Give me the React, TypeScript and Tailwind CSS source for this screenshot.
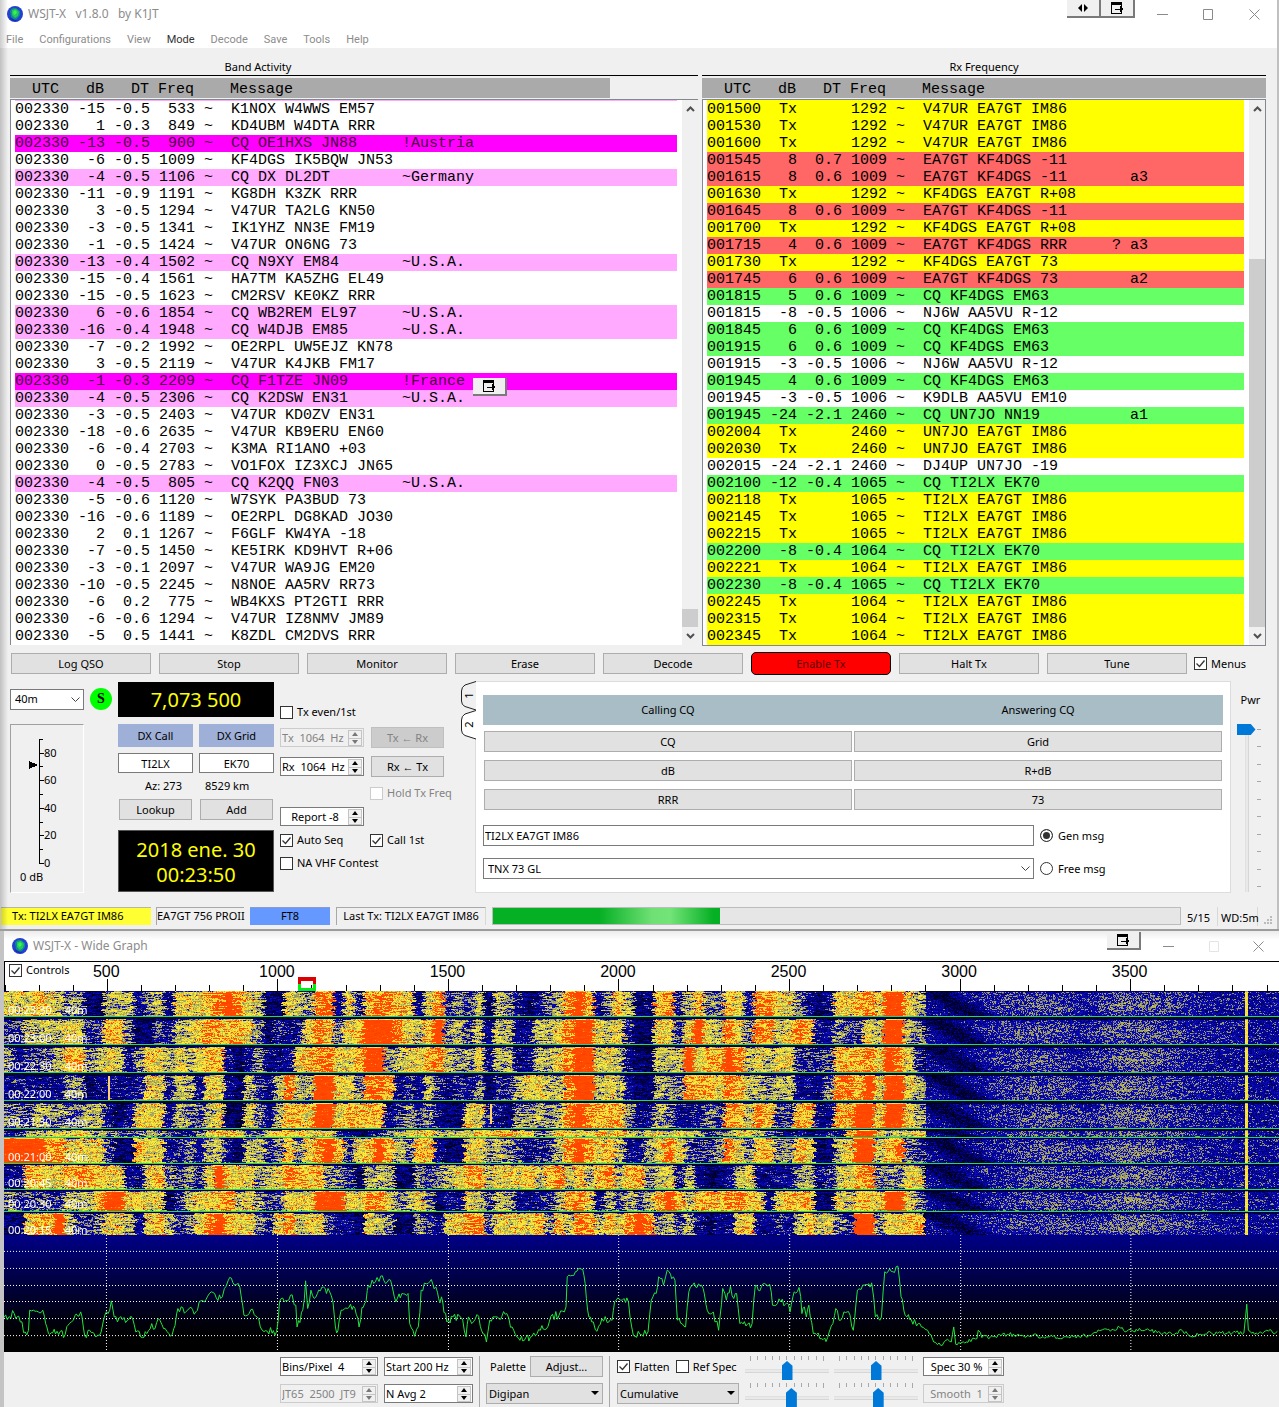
import { useEffect, useRef, type ReactNode } from "react";
import clsx from "clsx";

type Tone = "none" | "new" | "cq" | "tx" | "mine" | "green";

type Decode = [utc: string, db: string, dt: string, freq: string, message: string, note: string, tone: Tone];

const toneClass: Record<Tone, string> = {
  none: "",
  new: "bg-[#ff00ff] text-[#4b0040]",
  cq: "bg-[#ffaaff]",
  tx: "bg-[#ffff00]",
  mine: "bg-[#ff6666]",
  green: "bg-[#66ff66]",
};

const bandActivity: Decode[] = [
  ["002330", "-15", "-0.5", "533", "K1NOX W4WWS EM57", "", "none"],
  ["002330", "1", "-0.3", "849", "KD4UBM W4DTA RRR", "", "none"],
  ["002330", "-13", "-0.5", "900", "CQ OE1HXS JN88", "!Austria", "new"],
  ["002330", "-6", "-0.5", "1009", "KF4DGS IK5BQW JN53", "", "none"],
  ["002330", "-4", "-0.5", "1106", "CQ DX DL2DT", "~Germany", "cq"],
  ["002330", "-11", "-0.9", "1191", "KG8DH K3ZK RRR", "", "none"],
  ["002330", "3", "-0.5", "1294", "V47UR TA2LG KN50", "", "none"],
  ["002330", "-3", "-0.5", "1341", "IK1YHZ NN3E FM19", "", "none"],
  ["002330", "-1", "-0.5", "1424", "V47UR ON6NG 73", "", "none"],
  ["002330", "-13", "-0.4", "1502", "CQ N9XY EM84", "~U.S.A.", "cq"],
  ["002330", "-15", "-0.4", "1561", "HA7TM KA5ZHG EL49", "", "none"],
  ["002330", "-15", "-0.5", "1623", "CM2RSV KE0KZ RRR", "", "none"],
  ["002330", "6", "-0.6", "1854", "CQ WB2REM EL97", "~U.S.A.", "cq"],
  ["002330", "-16", "-0.4", "1948", "CQ W4DJB EM85", "~U.S.A.", "cq"],
  ["002330", "-7", "-0.2", "1992", "OE2RPL UW5EJZ KN78", "", "none"],
  ["002330", "3", "-0.5", "2119", "V47UR K4JKB FM17", "", "none"],
  ["002330", "-1", "-0.3", "2209", "CQ F1TZE JN09", "!France", "new"],
  ["002330", "-4", "-0.5", "2306", "CQ K2DSW EN31", "~U.S.A.", "cq"],
  ["002330", "-3", "-0.5", "2403", "V47UR KD0ZV EN31", "", "none"],
  ["002330", "-18", "-0.6", "2635", "V47UR KB9ERU EN60", "", "none"],
  ["002330", "-6", "-0.4", "2703", "K3MA RI1ANO +03", "", "none"],
  ["002330", "0", "-0.5", "2783", "VO1FOX IZ3XCJ JN65", "", "none"],
  ["002330", "-4", "-0.5", "805", "CQ K2QQ FN03", "~U.S.A.", "cq"],
  ["002330", "-5", "-0.6", "1120", "W7SYK PA3BUD 73", "", "none"],
  ["002330", "-16", "-0.6", "1189", "OE2RPL DG8KAD JO30", "", "none"],
  ["002330", "2", "0.1", "1267", "F6GLF KW4YA -18", "", "none"],
  ["002330", "-7", "-0.5", "1450", "KE5IRK KD9HVT R+06", "", "none"],
  ["002330", "-3", "-0.1", "2097", "V47UR WA9JG EM20", "", "none"],
  ["002330", "-10", "-0.5", "2245", "N8NOE AA5RV RR73", "", "none"],
  ["002330", "-6", "0.2", "775", "WB4KXS PT2GTI RRR", "", "none"],
  ["002330", "-6", "-0.6", "1294", "V47UR IZ8NMV JM89", "", "none"],
  ["002330", "-5", "0.5", "1441", "K8ZDL CM2DVS RRR", "", "none"],
];

const rxFrequency: Decode[] = [
  ["001500", "Tx", "", "1292", "V47UR EA7GT IM86", "", "tx"],
  ["001530", "Tx", "", "1292", "V47UR EA7GT IM86", "", "tx"],
  ["001600", "Tx", "", "1292", "V47UR EA7GT IM86", "", "tx"],
  ["001545", "8", "0.7", "1009", "EA7GT KF4DGS -11", "", "mine"],
  ["001615", "8", "0.6", "1009", "EA7GT KF4DGS -11", "    a3", "mine"],
  ["001630", "Tx", "", "1292", "KF4DGS EA7GT R+08", "", "tx"],
  ["001645", "8", "0.6", "1009", "EA7GT KF4DGS -11", "", "mine"],
  ["001700", "Tx", "", "1292", "KF4DGS EA7GT R+08", "", "tx"],
  ["001715", "4", "0.6", "1009", "EA7GT KF4DGS RRR", "  ? a3", "mine"],
  ["001730", "Tx", "", "1292", "KF4DGS EA7GT 73", "", "tx"],
  ["001745", "6", "0.6", "1009", "EA7GT KF4DGS 73", "    a2", "mine"],
  ["001815", "5", "0.6", "1009", "CQ KF4DGS EM63", "", "green"],
  ["001815", "-8", "-0.5", "1006", "NJ6W AA5VU R-12", "", "none"],
  ["001845", "6", "0.6", "1009", "CQ KF4DGS EM63", "", "green"],
  ["001915", "6", "0.6", "1009", "CQ KF4DGS EM63", "", "green"],
  ["001915", "-3", "-0.5", "1006", "NJ6W AA5VU R-12", "", "none"],
  ["001945", "4", "0.6", "1009", "CQ KF4DGS EM63", "", "green"],
  ["001945", "-3", "-0.5", "1006", "K9DLB AA5VU EM10", "", "none"],
  ["001945", "-24", "-2.1", "2460", "CQ UN7JO NN19", "    a1", "green"],
  ["002004", "Tx", "", "2460", "UN7JO EA7GT IM86", "", "tx"],
  ["002030", "Tx", "", "2460", "UN7JO EA7GT IM86", "", "tx"],
  ["002015", "-24", "-2.1", "2460", "DJ4UP UN7JO -19", "", "none"],
  ["002100", "-12", "-0.4", "1065", "CQ TI2LX EK70", "", "green"],
  ["002118", "Tx", "", "1065", "TI2LX EA7GT IM86", "", "tx"],
  ["002145", "Tx", "", "1065", "TI2LX EA7GT IM86", "", "tx"],
  ["002215", "Tx", "", "1065", "TI2LX EA7GT IM86", "", "tx"],
  ["002200", "-8", "-0.4", "1064", "CQ TI2LX EK70", "", "green"],
  ["002221", "Tx", "", "1064", "TI2LX EA7GT IM86", "", "tx"],
  ["002230", "-8", "-0.4", "1065", "CQ TI2LX EK70", "", "green"],
  ["002245", "Tx", "", "1064", "TI2LX EA7GT IM86", "", "tx"],
  ["002315", "Tx", "", "1064", "TI2LX EA7GT IM86", "", "tx"],
  ["002345", "Tx", "", "1064", "TI2LX EA7GT IM86", "", "tx"],
];

// One digit per 10 px of spectrum, 0 = noise floor, 9 = saturated.
const waterfall = [
  { from: 0, to: 25, levels: "6667654411555245266678986511654882637887626" + "834351542124589724751278357447638866421266" + "786996542" },
  { from: 28, to: 53, levels: "3355556633774113255687776413236874679998657" + "945352552255689965631166369658648856872243" + "365995432" },
  { from: 56, to: 81, levels: "4233457745652466565677212422267886679945667" + "854462552255689956521155596779856566333377" + "786986311" },
  { from: 84, to: 109, levels: "2322224412222366355266215325855996648872325" + "323241335665589956521154487768755455222488" + "796996542" },
  { from: 112, to: 137, levels: "4435444455212666254356116425776996777723434" + "211663214454589877742254223438758733772277" + "996996543" },
  { from: 139, to: 146, levels: "2345566754434454323477764466777663212345667" + "556677776645766676755665654334665432212327" + "996556753" },
  { from: 147, to: 172, levels: "9999886666311766234255215534746897367975477" + "211664543233589867522468643348647744761156" + "995784333" },
  { from: 174, to: 198, levels: "2277667877662267434369666456877744315551143" + "456775666757857578577456352112562222452356" + "784446611" },
  { from: 200, to: 220, levels: "4333335557996666135667856434666999668864564" + "122653552223578625354579757778876267771165" + "776996421" },
  { from: 222, to: 244, levels: "1167795334665267534689766436856632216541143" + "266884666674758857689845352122672232575643" + "994667711" },
];

const periods: [label: string, top: string][] = [
  ["00:23:30", "top-[11px]"],
  ["00:23:00", "top-[39px]"],
  ["00:22:30", "top-[67px]"],
  ["00:22:00", "top-[95px]"],
  ["00:21:30", "top-[123px]"],
  ["00:21:00", "top-[158px]"],
  ["00:20:45", "top-[184px]"],
  ["00:20:30", "top-[205px]"],
  ["00:20:15", "top-[231px]"],
];

const palette: [number, number, number, number][] = [
  [0, 0, 0, 16],
  [0.14, 0, 0, 80],
  [0.24, 0, 0, 160],
  [0.37, 16, 16, 190],
  [0.4, 140, 140, 110],
  [0.54, 190, 190, 80],
  [0.64, 250, 245, 60],
  [0.76, 255, 200, 40],
  [0.81, 255, 80, 0],
  [1, 255, 64, 0],
];

const trace: [number, number][] = [
  [10, 262], [35, 250], [50, 275], [62, 305], [70, 300], [73, 240], [90, 243], [105, 240], [112, 280], [122, 312],
  [140, 303], [160, 312], [167, 285], [180, 270], [198, 245], [208, 318], [220, 300], [235, 320], [248, 305], [257, 255],
  [265, 250], [273, 212], [280, 260], [300, 268], [325, 265], [333, 305], [345, 320], [360, 310], [372, 280], [380, 295],
  [388, 265], [405, 295], [418, 318], [426, 295], [436, 235], [460, 240], [480, 245], [492, 212], [505, 208], [518, 185],
  [530, 203], [545, 200], [550, 175], [563, 142], [575, 165], [588, 172], [598, 255], [615, 238], [630, 260], [638, 290],
  [655, 303], [678, 303], [685, 215], [712, 195], [725, 225], [728, 290], [742, 240], [749, 152], [754, 235], [762, 180],
  [770, 205], [785, 182], [808, 185], [816, 215], [822, 290], [828, 302], [836, 240], [855, 232], [870, 235], [880, 290],
  [887, 232], [897, 215], [903, 165], [920, 155], [937, 137], [945, 160], [957, 150], [970, 215], [985, 190], [1000, 190],
  [1004, 280], [1016, 318], [1025, 290], [1032, 180], [1053, 155], [1068, 170], [1075, 205], [1085, 215], [1095, 275],
  [1110, 260], [1130, 262], [1142, 320], [1148, 260], [1160, 275], [1173, 258], [1180, 300], [1192, 335], [1200, 270],
  [1215, 260], [1238, 252], [1255, 290], [1270, 322], [1285, 330], [1300, 320], [1320, 298], [1335, 298], [1350, 258],
  [1370, 255], [1387, 230], [1390, 140], [1410, 125], [1428, 118], [1434, 160], [1440, 240], [1450, 275], [1463, 303],
  [1475, 265], [1500, 270], [1506, 215], [1525, 210], [1540, 215], [1548, 290], [1556, 318], [1568, 312], [1588, 305],
  [1596, 210], [1608, 190], [1614, 140], [1626, 165], [1635, 120], [1654, 150], [1660, 270], [1680, 290], [1688, 185],
  [1701, 158], [1723, 175], [1733, 240], [1748, 245], [1761, 300], [1771, 175], [1780, 210], [1790, 168], [1798, 205],
  [1805, 190], [1813, 280], [1828, 287], [1843, 280], [1851, 165], [1858, 180], [1873, 160], [1886, 162], [1893, 225],
  [1913, 215], [1928, 218], [1936, 245], [1946, 185], [1958, 172], [1965, 250], [1971, 230], [1976, 260], [1982, 225],
  [1993, 310], [2013, 325], [2028, 322], [2041, 280], [2048, 235], [2056, 270], [2068, 245], [2083, 255], [2091, 300],
  [2101, 180], [2118, 165], [2136, 158], [2145, 260], [2160, 260], [2168, 125], [2188, 125], [2200, 108], [2208, 200],
  [2218, 255], [2233, 268], [2258, 290], [2273, 300], [2288, 335], [2305, 345], [2318, 330], [2331, 335], [2337, 290],
  [2342, 342], [2368, 335], [2394, 325], [2397, 300], [2406, 322], [2438, 318], [2468, 312], [2518, 315], [2568, 320],
  [2618, 320], [2668, 315], [2698, 300], [2733, 300], [2743, 290], [2753, 300], [2808, 298], [2858, 312], [2898, 302],
  [2918, 318], [2968, 308], [3048, 308], [3055, 222], [3059, 300], [3078, 308], [3108, 302], [3134, 310],
];

function makeRandom(seed: number) {
  let s = seed;
  return () => {
    s = (s * 1664525 + 1013904223) >>> 0;
    return s / 4294967296;
  };
}

function tracePath() {
  const rand = makeRandom(7);
  const out: string[] = [];
  for (let i = 0; i < trace.length - 1; i++) {
    const [x0, y0] = trace[i];
    const [x1, y1] = trace[i + 1];
    const steps = Math.max(1, Math.round((x1 - x0) / 4));
    const jitter = x0 > 2240 ? 12 : 24;
    for (let k = 0; k < steps; k++) {
      const t = k / steps;
      const noise = k === 0 ? 0 : (rand() - 0.5) * jitter;
      out.push(`${Math.round(x0 + (x1 - x0) * t)},${Math.round(y0 + (y1 - y0) * t + noise)}`);
    }
  }
  return out.join(" ");
}

function shade(v: number) {
  const c = Math.min(1, Math.max(0, v));
  for (let i = 1; i < palette.length; i++) {
    if (c <= palette[i][0]) {
      const a = palette[i - 1];
      const b = palette[i];
      const t = (c - a[0]) / (b[0] - a[0]);
      return [a[1] + (b[1] - a[1]) * t, a[2] + (b[2] - a[2]) * t, a[3] + (b[3] - a[3]) * t];
    }
  }
  return [255, 64, 0];
}

const bell = (d: number, w: number) => Math.exp(-(d * d) / (2 * w * w));

function paintWaterfall(ctx: CanvasRenderingContext2D, width: number, height: number) {
  const rand = makeRandom(42);
  const image = ctx.createImageData(width, height);
  const put = (x: number, y: number, c: number[]) => {
    const o = (y * width + x) * 4;
    image.data[o] = c[0];
    image.data[o + 1] = c[1];
    image.data[o + 2] = c[2];
    image.data[o + 3] = 255;
  };
  for (let y = 0; y < height; y++) {
    const index = waterfall.findIndex((b) => y >= b.from && y < b.to);
    const band = waterfall[index];
    let streak = 0;
    let left = 0;
    const wobble = Math.round((rand() - 0.5) * 6);
    for (let x = 0; x < width; x++) {
      if (left-- <= 0) {
        streak = (rand() - 0.5) * 0.34;
        left = 1 + Math.floor(rand() * 6);
      }
      const grain = (rand() - 0.5) * 0.22;
      if (!band) {
        put(x, y, shade(0.06 + Math.abs(grain)));
        continue;
      }
      const t = (y - band.from) / (band.to - band.from);
      const edge = y === band.from ? -0.2 : 0;
      let v: number;
      if (x < 922) {
        const cell = Math.min(band.levels.length - 1, Math.max(0, Math.floor((x + wobble) / 10)));
        const level = Number(band.levels[cell]);
        v = 0.03 + level * 0.098 + (streak + grain) * (level === 9 ? 0.5 : 1);
        if (level < 3) v = 0.08 + level * 0.085 + (streak + grain) * 0.8;
      } else {
        v = 0.26 + 0.04 * bell(x - 1085, 150);
        v += 0.08 * bell(x - 1030 - index * 3, 40) * bell(t - 0.55, 0.35);
        v += 0.1 * bell(x - 1130, 38) * bell(t - 0.5, 0.35);
        v -= 0.05 * bell(x - 1080, 16);
        v += streak * 0.45 + grain * 1.1;
      }
      // the filter skirt sweeps to the right as each period ages
      v -= 0.2 * bell(x - 930 - t * 42, 12) * (x > 915 ? 1 : 0.4);
      if (x > 1240 && x < 1244) v = 0.68 + grain * 0.6;
      put(x, y, shade(v + edge));
    }
  }
  ctx.putImageData(image, 0, 0);
  ctx.fillStyle = "#20dc50";
  for (const y of [25, 53, 81, 109, 137, 146, 172, 198, 220]) ctx.fillRect(0, y, width, 1);
  ctx.fillStyle = "#ffd070";
  ctx.fillRect(104, 85, 2, 24);
  ctx.fillRect(486, 113, 2, 20);
}

function Globe({ className }: { className: string }) {
  return (
    <svg viewBox="0 0 16 16" className={className} aria-hidden="true">
      <circle cx="8" cy="8" r="8" fill="#2340d0" />
      <path d="M3 5q2-4 6-3l4 3v4l-3 4-3 1-3-3z" fill="#128a8c" />
      <path d="M5 4l4-1 3 3-1 4-3 2-3-3z" fill="#22c860" />
      <path d="M6 6l2-2 2 2-1 2-2 1z" fill="#3df050" />
      <path d="M2 11c2 4 6 5 9 4l-5-2z" fill="#1a2cb8" />
    </svg>
  );
}

function DockIcon() {
  return (
    <svg viewBox="0 0 14 12" className="h-3 w-[14px]" aria-hidden="true" shapeRendering="crispEdges">
      <path d="M1 0h11v3H1z" />
      <path d="M1.500 1v10.500h10V9M11.500 3v2" fill="none" stroke="#000" />
      <path d="M5 7h6" stroke="#000" strokeWidth="1" />
      <path d="M10 4l4 3-4 3z" />
    </svg>
  );
}

function DockButton({ label, className, children }: { label: string; className?: string; children?: ReactNode }) {
  return (
    <button
      aria-label={label}
      className={clsx(
        "flex h-[18px] w-[34px] items-center justify-center border-r-2 border-b-2 border-[#7a7a7a] bg-[#f0f0f0]",
        className,
      )}
    >
      {children ?? <DockIcon />}
    </button>
  );
}

function WindowButtons({ faded }: { faded?: boolean }) {
  return (
    <div className="flex text-[#8a8a8a]">
      <button aria-label="Minimize" className="flex h-7 w-[46px] items-center justify-center">
        <svg viewBox="0 0 11 11" className="size-[11px]" stroke="currentColor"><path d="M0 5.500h11" /></svg>
      </button>
      <button aria-label="Maximize" className={clsx("flex h-7 w-[46px] items-center justify-center", faded && "text-[#e4e4e4]")}>
        <svg viewBox="0 0 11 11" className="size-[11px]" stroke="currentColor" fill="none"><path d="M.5.5h9v10h-9z" /></svg>
      </button>
      <button aria-label="Close" className={clsx("flex h-7 items-center justify-center", faded ? "w-[42px]" : "w-[46px]")}>
        <svg viewBox="0 0 11 11" className="size-[11px]" stroke="currentColor"><path d="M.5.5l10 10M10.500.5l-10 10" /></svg>
      </button>
    </div>
  );
}

function PushButton({ children, className, disabled }: { children: ReactNode; className?: string; disabled?: boolean }) {
  return (
    <button
      disabled={disabled}
      className={clsx(
        "flex h-[21px] items-center justify-center border",
        disabled ? "border-[#bfbfbf] bg-[#cccccc] text-[#838383]" : "border-[#adadad] bg-[#e1e1e1]",
        className,
      )}
    >
      {children}
    </button>
  );
}

function Check({ label, checked, disabled }: { label: string; checked?: boolean; disabled?: boolean }) {
  return (
    <label className={clsx("flex h-4 items-center gap-1 whitespace-nowrap", disabled && "text-[#838383]")}>
      <span className="relative size-[13px]">
        <input
          type="checkbox"
          defaultChecked={checked}
          disabled={disabled}
          className="peer block size-[13px] appearance-none border border-[#333] bg-white disabled:border-[#ccc]"
        />
        <svg viewBox="0 0 13 13" className="pointer-events-none absolute inset-0 hidden size-[13px] peer-checked:block" fill="none" stroke="#333" strokeWidth="1.300">
          <path d="M2.500 6.500l3 3 5-6" />
        </svg>
      </span>
      {label}
    </label>
  );
}

function Spin({ label, value, className, disabled, align = "left" }: {
  label: string;
  value: string;
  className: string;
  disabled?: boolean;
  align?: "left" | "center";
}) {
  return (
    <div
      className={clsx(
        "flex h-[19px] items-center border pr-px",
        disabled ? "border-[#ccc] bg-[#f0f0f0] text-[#838383]" : "border-[#7a7a7a] bg-white",
        className,
      )}
    >
      <input
        aria-label={label}
        defaultValue={value}
        disabled={disabled}
        className={clsx("h-4 w-0 min-w-0 flex-1 bg-transparent pl-px whitespace-pre outline-none", align === "center" && "text-center")}
      />
      <div className={clsx("flex w-[14px] flex-col", disabled ? "text-[#777]" : "text-black")}>
        <button aria-label={`${label} up`} disabled={disabled} className="flex h-2 items-center justify-center border border-b-0 border-[#c4c4c4] bg-[#f0f0f0]">
          <svg viewBox="0 0 6 4" className="h-1 w-[6px]" fill="currentColor"><path d="M3 0l3 4H0z" /></svg>
        </button>
        <button aria-label={`${label} down`} disabled={disabled} className="flex h-2 items-center justify-center border border-[#c4c4c4] bg-[#f0f0f0]">
          <svg viewBox="0 0 6 4" className="h-1 w-[6px]" fill="currentColor"><path d="M3 4l3-4H0z" /></svg>
        </button>
      </div>
    </div>
  );
}

function Select({ label, value, className, solid }: { label: string; value: string; className: string; solid?: boolean }) {
  return (
    <div className={clsx("relative h-[21px]", className)}>
      <select
        aria-label={label}
        className={clsx(
          "block h-[21px] w-full appearance-none border",
          solid ? "border-[#adadad] bg-[#e1e1e1] pl-[2px]" : "border-[#7a7a7a] bg-white pl-1",
        )}
      >
        <option>{value}</option>
      </select>
      {solid ? (
        <svg viewBox="0 0 8 4" className="pointer-events-none absolute top-2 right-1 h-1 w-2"><path d="M0 0h8L4 4z" /></svg>
      ) : (
        <svg viewBox="0 0 9 5" className="pointer-events-none absolute top-2 right-1 h-[5px] w-[9px]" fill="none" stroke="#444"><path d="M.5.5l4 4 4-4" /></svg>
      )}
    </div>
  );
}

function DecodeList({ title, rows, thumb, narrowHeader, topSliver, boxed }: {
  title: string;
  rows: Decode[];
  thumb: string;
  narrowHeader?: boolean;
  topSliver?: string;
  boxed?: boolean;
}) {
  return (
    <section className="flex flex-col">
      <h2 className="flex h-[27px] items-end justify-center pb-px leading-[14px]">
        <span className={clsx(narrowHeader && "mr-[192px]")}>{title}</span>
      </h2>
      <div className="h-px bg-black" />
      <div
        className={clsx(
          "mt-0.5 mb-px h-5 overflow-hidden bg-[#aaaaaa] pl-[22px] font-['Liberation_Mono',monospace] text-[15px] leading-6 whitespace-pre",
          narrowHeader && "w-[600px]",
        )}
      >
        {"UTC   dB   DT Freq    Message"}
      </div>
      <div className={clsx("flex border border-[#828790] bg-white", !boxed && "border-r-0 border-b-0")}>
        <div className="flex-1 pl-1">
          <div className={clsx("h-px", topSliver)} />
          <table className="w-full table-fixed border-collapse font-['Liberation_Mono',monospace] text-[15px] leading-4 whitespace-pre">
            <tbody>
              {rows.map(([utc, db, dt, freq, message, note, tone], i) => (
                <tr key={i} className={clsx("h-[17px]", toneClass[tone])}>
                  <td className="w-[54px] p-0 pt-px">{utc}</td>
                  <td className="w-[36px] p-0 pt-px text-right">{db}</td>
                  <td className="w-[45px] p-0 pt-px text-right">{dt}</td>
                  <td className="w-[45px] p-0 pt-px text-right">{freq}</td>
                  <td className="w-[18px] p-0 pt-px text-right">~</td>
                  <td className="w-[189px] p-0 pt-px pl-[18px]">{message}</td>
                  <td className="p-0 pt-px">{note}</td>
                </tr>
              ))}
            </tbody>
          </table>
        </div>
        <div className="ml-[5px] flex w-4 flex-col items-center bg-[#f0f0f0]">
          <svg viewBox="0 0 9 6" className="my-[6px] h-[6px] w-[9px] shrink-0" fill="none" stroke="#505050" strokeWidth="2"><path d="M1 5l3.500-3.500L8 5" /></svg>
          <div className="flex-1" />
          <div className={clsx("w-4 shrink-0 bg-[#cdcdcd]", thumb)} />
          <svg viewBox="0 0 9 6" className="my-[6px] h-[6px] w-[9px] shrink-0" fill="none" stroke="#505050" strokeWidth="2"><path d="M1 1l3.500 3.500L8 1" /></svg>
        </div>
      </div>
    </section>
  );
}

function Meter() {
  return (
    <div className="mt-[14px] h-[169px] w-[74px] border-t border-r border-b border-l border-[#a0a0a0] border-r-white border-b-white">
      <svg viewBox="0 0 72 167" className="h-[167px] w-[72px] font-['Noto_Sans',sans-serif] text-[11px]" shapeRendering="crispEdges">
        <path d="M28.500 14v125" stroke="#000" />
        {[0, 1, 2, 3, 4, 5, 6, 7, 8, 9].map((n) => {
          const y = 138.5 - Math.round(n * 13.8);
          return <path key={n} d={`M28 ${y}h${n % 2 ? 4 : 5}`} stroke="#000" />;
        })}
        {[0, 20, 40, 60, 80].map((n) => (
          <text key={n} x="33" y={142 - Math.round(n * 1.38)}>{n}</text>
        ))}
        <path d="M18 36l9 4-9 4z" />
        <text x="9" y="156">0 dB</text>
      </svg>
    </div>
  );
}

function StationColumn() {
  return (
    <div className="flex w-[156px] shrink-0 flex-col pt-px text-center">
      <output className="flex h-[35px] items-center justify-center bg-black text-[20px] text-[#ffff00]">7,073 500</output>
      <div className="mt-[7px] grid grid-cols-2 gap-x-[6px]">
        <label htmlFor="dx-call" className="h-[23px] bg-[#9fb0d8] leading-[23px]">DX Call</label>
        <label htmlFor="dx-grid" className="h-[23px] bg-[#9fb0d8] leading-[23px]">DX Grid</label>
        <input id="dx-call" defaultValue="TI2LX" className="mt-[6px] h-5 w-full border border-[#7a7a7a] bg-white text-center" />
        <input id="dx-grid" defaultValue="EK70" className="mt-[6px] h-5 w-full border border-[#7a7a7a] bg-white text-center" />
        <span className="h-[26px] pl-4 leading-[26px]">Az: 273</span>
        <span className="h-[26px] pl-[6px] text-left leading-[26px]">8529 km</span>
        <PushButton className="mx-px">Lookup</PushButton>
        <PushButton className="mx-px">Add</PushButton>
      </div>
      <output className="mt-[10px] h-[62px] border border-[#555] bg-black pt-[6px] text-[20px] leading-[25px] text-[#ffff00]">
        2018 ene. 30
        <br />
        00:23:50
      </output>
    </div>
  );
}

function TxColumn() {
  return (
    <div className="flex w-[170px] shrink-0 flex-col pt-[23px]">
      <Check label="Tx even/1st" />
      <div className="mt-[7px] flex items-center gap-[7px]">
        <Spin label="Tx frequency" value="Tx  1064  Hz" className="w-[84px]" disabled />
        <PushButton className="w-[73px]" disabled>Tx ← Rx</PushButton>
      </div>
      <div className="mt-2 flex items-center gap-[7px]">
        <Spin label="Rx frequency" value="Rx  1064  Hz" className="w-[84px]" />
        <PushButton className="w-[73px]">Rx ← Tx</PushButton>
      </div>
      <div className="mt-2 pl-[90px]">
        <Check label="Hold Tx Freq" disabled />
      </div>
      <div className="mt-[6px]">
        <Spin label="Report" value="Report -8" className="w-[84px]" align="center" />
      </div>
      <div className="mt-[6px] grid grid-cols-[90px_1fr]">
        <Check label="Auto Seq" checked />
        <Check label="Call 1st" checked />
      </div>
      <div className="mt-[7px]">
        <Check label="NA VHF Contest" />
      </div>
    </div>
  );
}

function MessagePanel() {
  return (
    <div className="flex min-w-0 flex-1">
      <div role="tablist" className="z-10 -mr-px w-[15px] shrink-0">
        {["1", "2"].map((n) => (
          <button key={n} role="tab" aria-selected={n === "2"} className="relative block h-[29px] w-[15px]">
            <svg viewBox="0 0 15 30" className="absolute inset-0 h-[30px] w-[15px]" fill={n === "2" ? "#fff" : "#f0f0f0"} stroke="#222">
              <path d="M15 .5L4 4Q.5 6 .5 10v10q0 4 3.500 5.500L15 29" />
            </svg>
            <span className="relative block -rotate-90 leading-[15px]">{n}</span>
          </button>
        ))}
      </div>
      <div className="flex-1 border border-[#dcdcdc] bg-white px-[7px] pt-[13px] pb-3">
        <div className="grid h-[30px] grid-cols-2 bg-[#a9bdc6] text-center leading-[30px]">
          <span>Calling CQ</span>
          <span>Answering CQ</span>
        </div>
        <div className="mt-[6px] grid grid-cols-2 gap-x-[2px] gap-y-2 px-px">
          {["CQ", "Grid", "dB", "R+dB", "RRR", "73"].map((t) => (
            <PushButton key={t}>{t}</PushButton>
          ))}
        </div>
        <div className="mt-[15px] grid grid-cols-[551fr_189fr] items-center gap-y-3">
          <input aria-label="Generated message" defaultValue="TI2LX EA7GT IM86" className="h-[21px] w-full border border-[#7a7a7a] bg-white pl-px" />
          <Radio label="Gen msg" checked />
          <Select label="Free message" value="TNX 73 GL" className="w-full" />
          <Radio label="Free msg" />
        </div>
      </div>
    </div>
  );
}

function Radio({ label, checked }: { label: string; checked?: boolean }) {
  return (
    <label className="flex items-center gap-[5px] pl-[6px]">
      <input
        type="radio"
        name="message"
        defaultChecked={checked}
        className="size-[13px] appearance-none rounded-full border border-[#333] bg-white checked:bg-[#333] checked:shadow-[inset_0_0_0_2px_white]"
      />
      {label}
    </label>
  );
}

function PowerSlider() {
  return (
    <div className="flex w-[35px] shrink-0 flex-col items-center pt-3">
      <label htmlFor="pwr" className="mr-[-4px] leading-[14px]">Pwr</label>
      <div className="mt-[17px] flex h-[168px] gap-[1px]">
        <input
          id="pwr"
          type="range"
          defaultValue={100}
          className="h-[168px] w-[19px] appearance-none bg-[linear-gradient(90deg,transparent_8px,#d6d6d6_8px,#e9e9e9_9px,#e9e9e9_11px,#d6d6d6_11px,#d6d6d6_12px,transparent_12px)] [direction:rtl] [writing-mode:vertical-lr] [&::-webkit-slider-thumb]:h-[11px] [&::-webkit-slider-thumb]:w-[19px] [&::-webkit-slider-thumb]:appearance-none [&::-webkit-slider-thumb]:bg-[#0078d7] [&::-webkit-slider-thumb]:[clip-path:polygon(0_0,75%_0,100%_50%,75%_100%,0_100%)]"
        />
        <div className="flex flex-col justify-between py-[5px]">
          {Array.from({ length: 10 }, (_, i) => (
            <span key={i} className="h-px w-1 bg-[#a8a8a8]" />
          ))}
        </div>
      </div>
    </div>
  );
}

function LevelSlider({ label, value }: { label: string; value: number }) {
  return (
    <div className="w-[84px]">
      <div className="flex h-[5px] justify-between px-[5px]">
        {Array.from({ length: 11 }, (_, i) => (
          <span key={i} className={clsx("w-px bg-[#a8a8a8]", i % 10 === 0 ? "h-[5px]" : "h-1")} />
        ))}
      </div>
      <input
        type="range"
        aria-label={label}
        defaultValue={value}
        className="block h-[19px] w-full appearance-none bg-[linear-gradient(transparent_8px,#d6d6d6_8px,#e9e9e9_9px,#e9e9e9_11px,#d6d6d6_11px,#d6d6d6_12px,transparent_12px)] [&::-webkit-slider-thumb]:h-[19px] [&::-webkit-slider-thumb]:w-[11px] [&::-webkit-slider-thumb]:appearance-none [&::-webkit-slider-thumb]:bg-[#0078d7] [&::-webkit-slider-thumb]:[clip-path:polygon(50%_0,100%_25%,100%_100%,0_100%,0_25%)]"
      />
    </div>
  );
}

function StatusBar() {
  return (
    <footer className="flex h-5 items-center pr-[4px] pl-[1px] leading-4">
      <span className="h-[18px] w-[150px] border-t border-[#b8b8a0] bg-[#ffff33] pl-[11px] whitespace-nowrap">Tx: TI2LX EA7GT IM86</span>
      <span className="ml-[5px] h-[18px] w-[88px] border-t border-l border-[#a8a8a8] text-center whitespace-nowrap">EA7GT 756 PROII</span>
      <span className="ml-[6px] h-[18px] w-[80px] border-t border-[#8a9cc8] bg-[#6699ff] text-center">FT8</span>
      <span className="ml-[6px] h-[18px] w-[150px] border-t border-r border-l border-[#a8a8a8] border-r-[#d8d8d8] text-center whitespace-nowrap">Last Tx: TI2LX EA7GT IM86</span>
      <div role="progressbar" aria-valuenow={5} aria-valuemax={15} className="ml-[6px] h-[18px] flex-1 border border-[#bcbcbc] bg-[#e6e6e6]">
        <div className="h-4 w-[33%] bg-[linear-gradient(90deg,#06b025_47%,#6fe074_70%,#73e478_78%,#06b025_97%)]" />
      </div>
      <span className="w-[36px] pt-[3px] pl-[6px]">5/15</span>
      <span className="w-[41px] border-x border-[#d8d8d8] pt-[3px] pl-[3px] whitespace-nowrap">WD:5m</span>
      <svg viewBox="0 0 9 9" className="mt-2 ml-[6px] size-[9px]" fill="#bbb">
        <path d="M6 0h2v2H6zM3 3h2v2H3zM6 3h2v2H6zM0 6h2v2H0zM3 6h2v2H3zM6 6h2v2H6z" />
      </svg>
    </footer>
  );
}

const SPAN = 3735;
const hzPercent = (hz: number) => `${((hz - 200) / SPAN) * 100}%`;
const majors = [500, 1000, 1500, 2000, 2500, 3000, 3500];

function FrequencyScale() {
  const ticks = Array.from({ length: 38 }, (_, i) => 200 + i * 100);
  return (
    <div className="relative h-[30px] border-t border-l border-black bg-white">
      <svg className="block h-[29px] w-full font-['Liberation_Sans',sans-serif] text-[16px]" shapeRendering="crispEdges">
        {ticks.map((hz) => (
          <line key={hz} x1={hzPercent(hz)} x2={hzPercent(hz)} y1={hz % 500 ? 23 : 17} y2="29" stroke="#000" />
        ))}
        {majors.map((hz) => (
          <text key={hz} x={hzPercent(hz)} y="15" dx="-1" textAnchor="middle">{hz}</text>
        ))}
      </svg>
      <div className="absolute top-0 left-1">
        <Check label="Controls" checked />
      </div>
      <svg viewBox="0 0 18 14" className="absolute top-[15px] left-[23%] h-[14px] w-[18px]" shapeRendering="crispEdges">
        <path d="M0 7h18v7H0z" fill="#00ee10" />
        <path d="M0 0h18v7H0z" fill="#dd0000" />
        <path d="M3 4h12v7H3z" fill="#fff" />
        <path d="M13 8h1v3h-1z" />
      </svg>
    </div>
  );
}

function Waterfall() {
  const ref = useRef<HTMLCanvasElement>(null);
  useEffect(() => {
    const ctx = ref.current?.getContext("2d");
    if (ctx) paintWaterfall(ctx, 1275, 244);
  }, []);
  return (
    <div className="relative">
      <canvas ref={ref} width={1275} height={244} className="block h-[244px] w-full" />
      {periods.map(([label, top]) => (
        <p key={label} className={clsx("absolute left-1 flex gap-[13px] leading-4 text-white", top)}>
          <span>{label}</span>
          <span>40m</span>
        </p>
      ))}
    </div>
  );
}

function Spectrum() {
  return (
    <div className="h-[117px] bg-linear-to-b from-[#000088] to-black">
      <svg className="block h-[117px] w-full" viewBox="10 15 3124 350" preserveAspectRatio="none" fill="none">
        {[64, 115, 166, 214, 265, 316].map((y) => (
          <line key={y} x1="10" x2="3134" y1={y} y2={y} stroke="#fff" strokeDasharray="1 2" vectorEffect="non-scaling-stroke" />
        ))}
        {[261, 680, 1099, 1516, 1935, 2354, 2771].map((x) => (
          <line key={x} x1={x} x2={x} y1="15" y2="365" stroke="#fff" strokeDasharray="1 2" vectorEffect="non-scaling-stroke" />
        ))}
        <polyline points={tracePath()} stroke="#22e63c" vectorEffect="non-scaling-stroke" />
      </svg>
    </div>
  );
}

function GraphControls() {
  return (
    <div className="flex h-[55px] justify-center gap-[6px] pt-1 pl-px">
      <div className="grid grid-cols-[98px_89px] gap-x-[6px] gap-y-2 self-start pt-px">
        <Spin label="Bins per pixel" value="Bins/Pixel  4" className="w-full" />
        <Spin label="Start" value="Start 200 Hz" className="w-full" />
        <Spin label="JT65 JT9 split" value="JT65  2500  JT9" className="w-full" disabled />
        <Spin label="N Avg" value="N Avg 2" className="w-full" />
      </div>
      <div className="flex flex-col gap-[6px] border-l border-[#a8a8a8] pl-[6px]">
        <div className="flex items-center justify-between pl-1">
          <span>Palette</span>
          <PushButton className="w-[73px]">Adjust...</PushButton>
        </div>
        <Select label="Palette" value="Digipan" className="w-[117px]" solid />
      </div>
      <div className="flex flex-col gap-[6px] border-l border-[#a8a8a8] pl-[7px]">
        <div className="flex h-[21px] items-center gap-[6px]">
          <Check label="Flatten" checked />
          <Check label="Ref Spec" />
        </div>
        <Select label="Spectrum mode" value="Cumulative" className="w-[122px]" solid />
      </div>
      <div className="grid grid-cols-2 gap-x-[5px] gap-y-[3px] self-start">
        <LevelSlider label="Waterfall gain" value={50} />
        <LevelSlider label="Spectrum gain" value={50} />
        <LevelSlider label="Waterfall zero" value={56} />
        <LevelSlider label="Spectrum zero" value={53} />
      </div>
      <div className="-ml-px flex flex-col gap-2 pt-px">
        <Spin label="Spec" value="Spec 30 %" className="w-[81px]" align="center" />
        <Spin label="Smooth" value="Smooth  1" className="w-[81px]" align="center" disabled />
      </div>
    </div>
  );
}

const menus = ["File", "Configurations", "View", "Mode", "Decode", "Save", "Tools", "Help"];

export default function App() {
  return (
    <main className="bg-[#f0f0f0] font-['Noto_Sans',sans-serif] text-[11px] leading-4 text-black">
      <section className="relative border-r-2 border-[#c0c0c0] pb-[3px]">
        <header className="flex h-7 items-center bg-white pl-[7px] text-[12px] text-[#8c8c8c]">
          <Globe className="size-4" />
          <h1 className="pl-[5px] whitespace-pre">WSJT-X   v1.8.0   by K1JT</h1>
          <div className="ml-auto flex">
            <div className="mr-1 flex items-start">
              <DockButton label="Swap monitor">
                <svg viewBox="0 0 10 8" className="h-2 w-[10px]"><path d="M4 0v8L0 4zM6 0v8l4-4z" fill="#000" /></svg>
              </DockButton>
              <DockButton label="Move to display" />
            </div>
            <WindowButtons />
          </div>
        </header>
        <nav className="flex h-5 gap-4 bg-white pl-[6px] font-['Roboto',sans-serif] leading-6 text-[#8c8c8c]">
          {menus.map((m) => (
            <button key={m} className={clsx(m === "Mode" && "text-[#333]")}>{m}</button>
          ))}
        </nav>

        <div className="relative grid grid-cols-[688fr_564fr] gap-x-1 pr-[11px] pl-[10px]">
          <DecodeList title="Band Activity" rows={bandActivity} thumb="h-[18px]" topSliver="bg-[#ffaaff]" narrowHeader />
          <DecodeList title="Rx Frequency" rows={rxFrequency} thumb="h-[368px]" topSliver="bg-[#ffff00]" boxed />
          <DockButton label="Move to display" className="absolute top-[330px] left-[473px]" />
        </div>

        <div className="mt-[6px] flex items-center gap-[7px] pr-[31px] pl-[11px]">
          <div className="grid flex-1 grid-cols-8 items-center gap-x-2">
            <PushButton>Log QSO</PushButton>
            <PushButton>Stop</PushButton>
            <PushButton>Monitor</PushButton>
            <PushButton>Erase</PushButton>
            <PushButton>Decode</PushButton>
            <button className="h-[23px] rounded-[5px] border border-black bg-[#ff0000] text-[#5c0000]">Enable Tx</button>
            <PushButton>Halt Tx</PushButton>
            <PushButton>Tune</PushButton>
          </div>
          <Check label="Menus" checked />
        </div>

        <div className="mt-[6px] flex h-[212px] pr-[11px] pl-[10px]">
          <div className="w-[108px] shrink-0 pt-[7px]">
            <div className="flex items-center gap-[6px]">
              <Select label="Band" value="40m" className="w-[74px]" />
              <button className="size-[22px] rounded-full bg-[#00ff00] font-['Liberation_Serif',serif] text-[14px] font-bold">S</button>
            </div>
            <Meter />
          </div>
          <StationColumn />
          <div className="w-[6px] shrink-0" />
          <TxColumn />
          <div className="w-[11px] shrink-0" />
          <MessagePanel />
          <PowerSlider />
        </div>
        <div className="h-[13px]" />
        <StatusBar />
        <div className="pointer-events-none absolute inset-y-0 left-0 w-2 bg-linear-to-r from-black/20 to-transparent" />
      </section>

      <section className="border-t-2 border-[#9c9c9c]">
        <div className="border-l-4 border-[#c4c4c4]">
          <header className="flex h-[30px] items-center bg-linear-to-b from-[#ececec] to-white to-30% pl-2 text-[12px] text-[#8c8c8c]">
            <Globe className="size-4" />
            <h2 className="pl-[5px]">WSJT-X - Wide Graph</h2>
            <div className="ml-auto flex">
              <DockButton label="Move to display" className="mr-1" />
              <WindowButtons faded />
            </div>
          </header>
          <FrequencyScale />
          <Waterfall />
          <Spectrum />
          <GraphControls />
        </div>
      </section>
    </main>
  );
}
